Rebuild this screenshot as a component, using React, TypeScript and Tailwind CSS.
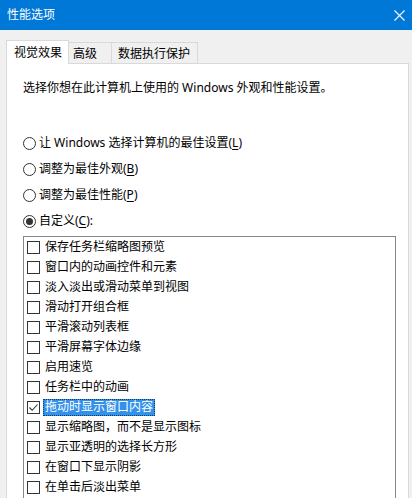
import React from 'react';

const items = [
  '保存任务栏缩略图预览',
  '窗口内的动画控件和元素',
  '淡入淡出或滑动菜单到视图',
  '滑动打开组合框',
  '平滑滚动列表框',
  '平滑屏幕字体边缘',
  '启用速览',
  '任务栏中的动画',
  '拖动时显示窗口内容',
  '显示缩略图，而不是显示图标',
  '显示亚透明的选择长方形',
  '在窗口下显示阴影',
  '在单击后淡出菜单',
];

const Radio: React.FC<{ checked?: boolean; children: React.ReactNode }> = ({ checked, children }) => (
  <div className="h-[26px] flex items-center">
    <div className="w-[13px] h-[13px] rounded-full border border-[#333333] bg-white flex items-center justify-center">
      {checked && <div className="w-[7px] h-[7px] rounded-full bg-[#333333]" />}
    </div>
    <span className="ml-[3px] leading-[16px]">{children}</span>
  </div>
);

const App: React.FC = () => {
  return (
    <div className="w-[412px] h-[498px] overflow-hidden bg-[#f0f0f0] text-[12px] text-black font-['Noto_Sans','Noto_Sans_CJK_SC',sans-serif]">
      {/* title bar */}
      <div className="h-[30px] bg-[#0078d7] flex items-center justify-between pl-[7px] pr-[6px]">
        <span className="leading-[16px] text-white">性能选项</span>
        <svg width="11" height="11" viewBox="0 0 11 11" className="mr-[1px]">
          <path d="M0.5 0.5 L10.5 10.5 M10.5 0.5 L0.5 10.5" stroke="#ffffff" strokeWidth="1.1" fill="none" />
        </svg>
      </div>

      <div className="pt-[10px]">
        <div className="relative z-10 flex items-end ml-[6px] h-[24px] -mb-px">
          <div className="w-[63px] h-[24px] bg-white border border-b-0 border-[#d9d9d9] pl-[7px] flex items-center leading-[16px]">
            视觉效果
          </div>
          <div className="w-[43px] h-[22px] border-t border-r border-b border-[#d9d9d9] pl-[4px] pt-[2px] flex items-center leading-[16px]">
            高级
          </div>
          <div className="w-[86px] h-[22px] border-t border-r border-b border-[#d9d9d9] pl-[6px] pt-[2px] flex items-center leading-[16px]">
            数据执行保护
          </div>
        </div>

        <div className="ml-[6px] w-[403px] h-[460px] bg-white border border-[#d9d9d9] pl-[16px] pt-[16px]">
          <p className="h-[16px] leading-[16px]">选择你想在此计算机上使用的 Windows 外观和性能设置。</p>

          <div className="mt-[34px]">
            <Radio>
              让 Windows 选择计算机的最佳设置(<span className="underline underline-offset-2">L</span>)
            </Radio>
            <Radio>
              调整为最佳外观(<span className="underline underline-offset-2">B</span>)
            </Radio>
            <Radio>
              调整为最佳性能(<span className="underline underline-offset-2">P</span>)
            </Radio>
            <Radio checked>
              自定义(<span className="underline underline-offset-2">C</span>):
            </Radio>
          </div>

          {/* list box */}
          <div className="mt-[2px] w-[373px] h-[300px] border border-[#828790] bg-white pl-[3px]">
            {items.map((label, i) => {
              const selected = i === 8;
              return (
                <div key={label} className="h-[20px] flex items-center">
                  <div className="w-[13px] h-[13px] border border-[#333333] bg-white flex items-center justify-center">
                    {selected && (
                      <svg width="11" height="11" viewBox="0 0 11 11">
                        <path d="M1.5 5.5 L4.2 8.3 L9.5 2.5" stroke="#333333" strokeWidth="1.1" fill="none" />
                      </svg>
                    )}
                  </div>
                  {selected ? (
                    <span className="ml-[3px] px-[1px] h-[17px] flex items-center leading-[16px] bg-[#3391ea] text-white border border-dotted border-[#0a3d6e]">
                      {label}
                    </span>
                  ) : (
                    <span className="ml-[5px] leading-[16px]">{label}</span>
                  )}
                </div>
              );
            })}
          </div>
        </div>
      </div>
    </div>
  );
};

export default App;
